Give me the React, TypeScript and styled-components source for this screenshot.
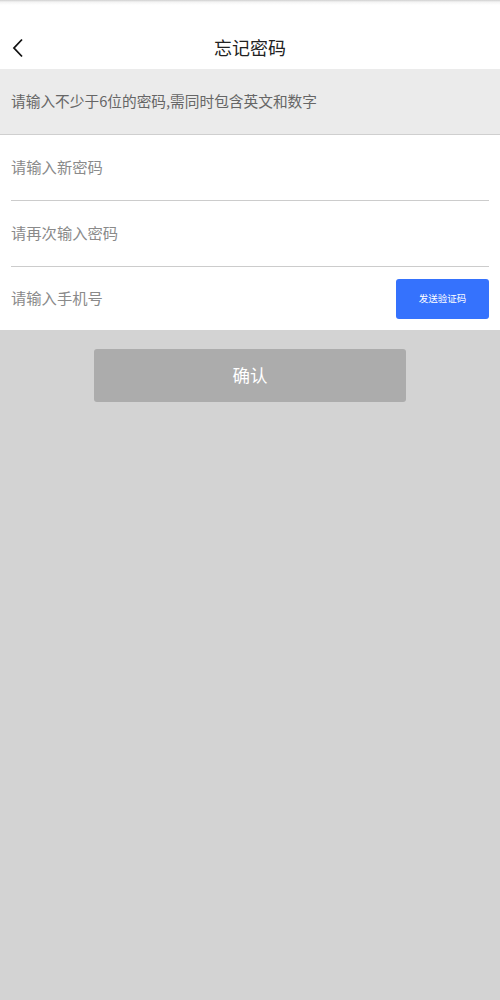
import React from "react";
import styled, { createGlobalStyle } from "styled-components";

const Global = createGlobalStyle`
  html, body { margin: 0; padding: 0; background: #d3d3d3; }
  body { font-family: "Noto Sans CJK SC", "Noto Sans", sans-serif; }
  * { box-sizing: border-box; }
`;

const Page = styled.div`
  width: 500px;
  min-height: 1000px;
  background: #d3d3d3;
  display: flex;
  flex-direction: column;
`;

const Header = styled.header`
  height: 69px;
  background: linear-gradient(to bottom, #cfcfcf 0px, #f4f4f4 2px, #ffffff 5px);
  display: grid;
  grid-template-columns: 60px 1fr 60px;
  align-items: center;
  padding-top: 25px;
`;

const Back = styled.button`
  border: none;
  background: none;
  padding: 0 0 0 12px;
  display: flex;
  align-items: center;
  height: 24px;
  cursor: pointer;
  margin-top: 1px;
`;

const Title = styled.h1`
  margin: 0;
  text-align: center;
  font-size: 18px;
  font-weight: 400;
  color: #222;
  line-height: 24px;
`;

const Notice = styled.div`
  height: 66px;
  background: #ebebeb;
  border-bottom: 1px solid #cfcfcf;
  display: flex;
  align-items: center;
  padding: 0 11px 2px;
  font-size: 14.7px;
  color: #666;
`;

const Form = styled.div`
  background: #fff;
  padding: 0 11px 0 11px;
  display: flex;
  flex-direction: column;
`;

const Row = styled.div<{ $last?: boolean }>`
  height: ${(p) => (p.$last ? "63px" : "66px")};
  display: flex;
  align-items: center;
  justify-content: space-between;
  border-bottom: ${(p) => (p.$last ? "none" : "1px solid #cccccc")};
`;

const Input = styled.input`
  border: none;
  outline: none;
  background: transparent;
  font-family: inherit;
  font-size: 15.3px;
  color: #333;
  flex: 1;
  padding: 0 0 3px;
  &::placeholder { color: #8a8a8a; }
`;

const CodeButton = styled.button`
  width: 93px;
  height: 40px;
  border: none;
  border-radius: 3px;
  background: #3572fd;
  color: #fff;
  font-family: inherit;
  font-size: 9.5px;
  padding: 0 0 1px;
`;

const Actions = styled.div`
  display: flex;
  justify-content: center;
  padding-top: 19px;
`;

const Confirm = styled.button`
  width: 312px;
  height: 53px;
  border: none;
  border-radius: 3px;
  background: #acacac;
  color: #fff;
  font-family: inherit;
  font-size: 17.5px;
  padding: 0 0 2px;
`;

export default function App() {
  return (
    <Page>
      <Global />
      <Header>
        <Back aria-label="返回">
          <svg width="12" height="20" viewBox="0 0 12 20">
            <path d="M10 1.5 L2 10 L10 18.5" fill="none" stroke="#111" strokeWidth="1.8" />
          </svg>
        </Back>
        <Title>忘记密码</Title>
        <span />
      </Header>
      <Notice>请输入不少于6位的密码,需同时包含英文和数字</Notice>
      <Form>
        <Row>
          <Input type="password" placeholder="请输入新密码" />
        </Row>
        <Row>
          <Input type="password" placeholder="请再次输入密码" />
        </Row>
        <Row $last>
          <Input type="tel" placeholder="请输入手机号" />
          <CodeButton>发送验证码</CodeButton>
        </Row>
      </Form>
      <Actions>
        <Confirm>确认</Confirm>
      </Actions>
    </Page>
  );
}
